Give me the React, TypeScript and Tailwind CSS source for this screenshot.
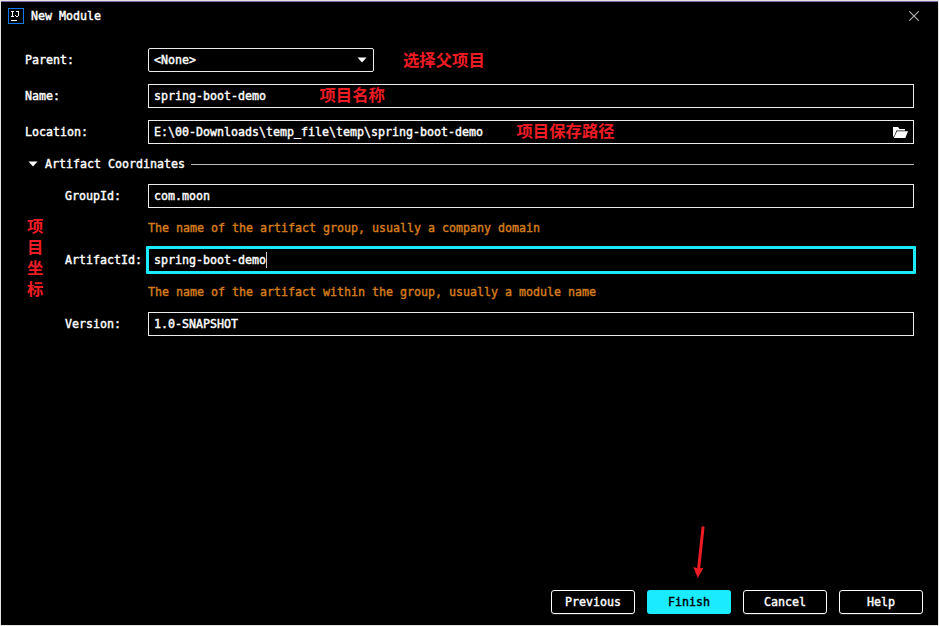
import type { ReactNode } from "react";

const mono = "font-['DejaVu_Sans_Mono','Liberation_Mono',monospace] text-[11.63px] leading-6 whitespace-pre [-webkit-text-stroke:0.4px_currentColor]";
const note = "absolute font-['Noto_Sans_CJK_SC',sans-serif] font-bold text-[16.35px] leading-6 text-[#ed1c24] whitespace-nowrap [-webkit-text-stroke:0px]";

function Field({ children, focused = false }: { children?: ReactNode; focused?: boolean }) {
  return (
    <div
      className={
        focused
          ? "relative -mx-0.5 -my-0.5 flex h-7 flex-1 items-center rounded-[1px] border-[3px] border-[#1aebff] pl-[5px]"
          : "relative flex h-6 flex-1 items-center border border-[#ececec] pl-[5px]"
      }
    >
      {children}
    </div>
  );
}

function Row({ label, indent = false, children }: { label: string; indent?: boolean; children: ReactNode }) {
  return (
    <div className="flex h-6 items-center">
      <label className={indent ? "w-[147px] shrink-0 pl-16" : "w-[147px] shrink-0 pl-6"}>{label}</label>
      {children}
    </div>
  );
}

function Hint({ children }: { children: string }) {
  return <p className="h-6 pl-[147px] text-[#d67d1c]">{children}</p>;
}

function Button({ children, primary = false }: { children: string; primary?: boolean }) {
  return (
    <button
      className={
        primary
          ? "flex h-6 w-[84px] items-center justify-center rounded-[3px] bg-[#1aebff] text-black"
          : "flex h-6 w-[84px] items-center justify-center rounded-[3px] border border-white shadow-[0_1px_0_#1c1f1f]"
      }
    >
      {children}
    </button>
  );
}

export default function App() {
  return (
    <main className={`relative flex h-[626px] w-[939px] flex-col overflow-hidden border border-[#e4e4e2] bg-black text-white ${mono}`}>
      <div className="h-px shrink-0 bg-[#8068ad]" />
      <header className="flex h-[28px] shrink-0 items-center pl-[7px]">
        <svg width="16" height="16" viewBox="0 0 16 16" shapeRendering="crispEdges">
          <rect x=".5" y=".5" width="15" height="15" fill="#000" stroke="#087cfa" />
          <path d="M3 3.5h3M4.5 3v6M3 8.5h3M8 3.5h3M10.5 3v5M7 7.5h1M8 8.5h2M3 12.5h6" fill="none" stroke="#fff" />
        </svg>
        <h1 className="ml-[7px]">New Module</h1>
        <svg className="ml-auto mr-[19px]" width="10" height="10" viewBox="0 0 10 10">
          <path d="M.2.2l9.6 9.6M9.8.2L.2 9.8" stroke="#b4b4b4" strokeWidth="1.1" />
        </svg>
      </header>

      <section className="mt-[18px] flex flex-col gap-3 pr-6">
        <Row label="Parent:">
          <div className="relative flex h-6 w-[226px] items-center justify-between rounded-[2px] border border-[#ececec] pl-[5px] pr-[6px]">
            <span>{"<None>"}</span>
            <svg width="10" height="6" viewBox="0 0 10 6">
              <path d="M.5.5h9L5 5.5z" fill="#fff" />
            </svg>
            <span className={`${note} left-[254px] top-[-2px]`}>选择父项目</span>
          </div>
        </Row>
        <Row label="Name:">
          <Field>
            <span>spring-boot-demo</span>
            <span className={`${note} left-[170.5px] top-[-3px]`}>项目名称</span>
          </Field>
        </Row>
        <Row label="Location:">
          <Field>
            <span>{"E:\\00-Downloads\\temp_file\\temp\\spring-boot-demo"}</span>
            <svg className="ml-auto mr-[5px]" width="15" height="12" viewBox="0 0 15 12">
              <path d="M0 10.5V1h5l1.5 2H12v1.5H3.5L1 10.5z" fill="#fff" />
              <path d="M4 5.3h11L12.3 12H.8z" fill="#fff" />
            </svg>
            <span className={`${note} left-[367.5px] top-[-3px]`}>项目保存路径</span>
          </Field>
        </Row>
      </section>

      <section className="relative mt-2 flex flex-col gap-2 pr-6">
        <div className="flex h-6 items-center pl-[27px]">
          <svg width="10" height="6" viewBox="0 0 10 6">
            <path d="M.5.5h9L5 5.5z" fill="#fff" />
          </svg>
          <h2 className="ml-[7px]">Artifact Coordinates</h2>
          <div className="ml-[6px] h-px flex-1 bg-[#b8b8b8]" />
        </div>
        <Row label="GroupId:" indent>
          <Field>com.moon</Field>
        </Row>
        <Hint>The name of the artifact group, usually a company domain</Hint>
        <Row label="ArtifactId:" indent>
          <Field focused>
            <span>spring-boot-demo</span>
            <span className="h-4 w-px bg-[#c8c8c8]" />
          </Field>
        </Row>
        <Hint>The name of the artifact within the group, usually a module name</Hint>
        <Row label="Version:" indent>
          <Field>1.0-SNAPSHOT</Field>
        </Row>
        <div className={`${note} left-[26px] top-[63px] w-[17px] !leading-[21px] !whitespace-normal break-all`}>项目坐标</div>
      </section>

      <footer className="relative mb-[11px] mr-[15px] mt-auto flex justify-end gap-3">
        <Button>Previous</Button>
        <Button primary>Finish</Button>
        <Button>Cancel</Button>
        <Button>Help</Button>
        <svg className="absolute bottom-[35px] right-[215px]" width="16" height="54" viewBox="0 0 16 54">
          <path d="M11 2.7L6.6 44" stroke="#ed1c24" strokeWidth="3" strokeLinecap="round" />
          <path d="M1.3 42l4.9 1.5 5.2-.5L5.8 53z" fill="#ed1c24" />
        </svg>
      </footer>
    </main>
  );
}
